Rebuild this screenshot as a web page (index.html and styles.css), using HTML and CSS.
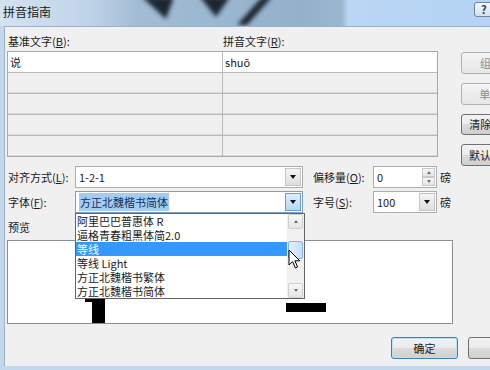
FILE: index.html
```html
<!DOCTYPE html>
<html lang="zh-CN">
<head>
  <meta charset="UTF-8">
  <title>拼音指南</title>
  <link rel="stylesheet" href="styles.css">
</head>
<body>
  <div class="window">
    <div class="titlebar">
      <svg class="glass" width="490" height="26" viewBox="0 0 490 26">
        <defs>
          <filter id="blur" x="-50%" y="-50%" width="200%" height="200%">
            <feGaussianBlur stdDeviation="2.2"/>
          </filter>
        </defs>
        <g filter="url(#blur)" fill="#1c2733">
          <path d="M142 -3 L174 -3 L166 19 Z"/>
          <path d="M200 -3 L230 -3 L216 17 Z"/>
          <path d="M262 -3 L272 -3 L247 25 L237 25 Z"/>
        </g>
      </svg>
      <span class="title">拼音指南</span>
      <span class="help">?</span>
    </div>

    <div class="client">
      <div class="top">
        <div class="main">
          <div class="heads">
            <span>基准文字(<u>B</u>):</span>
            <span>拼音文字(<u>R</u>):</span>
          </div>
          <div class="grid">
            <div class="cell on">说</div>
            <div class="cell on">shuō</div>
            <div class="cell"></div>
            <div class="cell"></div>
            <div class="cell"></div>
            <div class="cell"></div>
            <div class="cell"></div>
            <div class="cell"></div>
            <div class="cell"></div>
            <div class="cell"></div>
          </div>
        </div>
        <div class="side">
          <button class="btn" disabled>组合(<u>G</u>)</button>
          <button class="btn" disabled>单字(<u>M</u>)</button>
          <button class="btn">清除读音(<u>C</u>)</button>
          <button class="btn">默认读音(<u>D</u>)</button>
        </div>
      </div>

      <div class="opts">
        <label class="lbl">对齐方式(<u>L</u>):</label>
        <div class="combo">
          <span class="val">1-2-1</span>
          <span class="drop"><i class="tri"></i></span>
        </div>
        <label class="lbl lbl2">偏移量(<u>O</u>):</label>
        <div class="spin">
          <span class="val">0</span>
          <span class="arrows">
            <i class="arr"><b class="up"></b></i>
            <i class="arr"><b class="down"></b></i>
          </span>
        </div>
        <span class="unit">磅</span>

        <label class="lbl">字体(<u>F</u>):</label>
        <div class="combo focus">
          <span class="val"><span class="sel">方正北魏楷书简体</span></span>
          <span class="drop"><i class="tri"></i></span>
          <div class="list">
            <ul class="items">
              <li>阿里巴巴普惠体 R</li>
              <li>逼格青春粗黑体简2.0</li>
              <li class="hi">等线</li>
              <li>等线 Light</li>
              <li>方正北魏楷书繁体</li>
              <li>方正北魏楷书简体</li>
            </ul>
            <div class="scroll">
              <span class="sbtn"><b class="up"></b></span>
              <span class="thumb"></span>
              <span class="sbtn last"><b class="down"></b></span>
            </div>
          </div>
        </div>
        <label class="lbl lbl2">字号(<u>S</u>):</label>
        <div class="combo">
          <span class="val">100</span>
          <span class="drop"><i class="tri"></i></span>
        </div>
        <span class="unit">磅</span>
      </div>

      <div class="plabel">预览</div>
      <div class="preview">
        <svg width="444" height="82" viewBox="0 0 444 82">
          <path d="M77 56 H97 V82 H84 V61 H77 Z" fill="#000"/>
          <rect x="278" y="62" width="40" height="9" fill="#000"/>
        </svg>
      </div>

      <div class="actions">
        <button class="btn ok">确定</button>
        <button class="btn">取消</button>
      </div>
    </div>

    <svg class="cursor" width="14" height="21" viewBox="0 0 14 21">
      <path d="M1 1 V16 L4.6 12.6 L7.4 19 L9.6 18 L6.9 11.8 L11.8 11.8 Z" fill="#fff" stroke="#000" stroke-width="1" stroke-linejoin="round"/>
    </svg>
  </div>
</body>
</html>
```

FILE: styles.css
```css
/* Janela de diálogo estilo Windows 7 */
* {
  margin: 0;
  padding: 0;
  box-sizing: border-box;
}
html, body {
  width: 490px;
  height: 370px;
  overflow: hidden;
}
body {
  font-family: "Noto Sans CJK SC", "Noto Sans", sans-serif;
  font-size: 11px;
  color: #1b1b1b;
  background: #c4d8ec;
}
u {
  text-decoration: underline;
}
.window {
  position: relative;
  width: 540px;
  height: 370px;
  background: #c4d8ec;
}

/* Barra de título */
.titlebar {
  position: relative;
  height: 26px;
  background: linear-gradient(90deg, #d4e3f1 0, #bfd3e8 90px, #a2bcd5 138px, #94b0cb 300px, #9ab6d0 342px, #b9d7f5 348px, #b5d3f2 490px);
}
.glass {
  position: absolute;
  left: 0;
  top: 0;
}
.title {
  position: relative;
  display: block;
  padding-left: 3px;
  font-size: 12px;
  line-height: 24px;
  color: #1a1a1a;
}
.help {
  position: absolute;
  left: 474px;
  top: 2px;
  width: 26px;
  height: 15px;
  border: 1px solid #6f849b;
  border-radius: 3px;
  background: linear-gradient(#f6f9fc, #d3e0ee);
  font-size: 11px;
  line-height: 12px;
  padding-left: 6px;
  color: #3a3a3a;
  font-weight: bold;
}

/* Área do cliente */
.client {
  position: relative;
  margin-left: 4px;
  height: 340px;
  background: #f0f0f0;
  border-top: 1px solid #9cb1c6;
  border-left: 1px solid #9cb1c6;
  padding: 7px 0 0 2px;
}
.top {
  display: flex;
  gap: 23px;
  height: 132px;
}
.main {
  width: 431px;
}
.heads {
  display: grid;
  grid-template-columns: 215px 215px;
  line-height: 15px;
  margin-bottom: 2px;
  padding-left: 1px;
}
.grid {
  display: grid;
  grid-template-columns: 1fr 1fr;
  grid-auto-rows: 20px;
  gap: 1px;
  background: #b9b9b9;
  border: 1px solid #a9a9a9;
}
.cell {
  background: #f0f0f0;
  box-shadow: inset 0 -1px 0 #d9d9d9;
  line-height: 20px;
  padding-left: 2px;
}
.cell.on {
  background: #fff;
  box-shadow: none;
}
.side {
  display: flex;
  flex-direction: column;
  gap: 9px;
  margin-top: 18px;
}

/* Botões */
.btn {
  width: 75px;
  height: 22px;
  font-family: inherit;
  font-size: 11px;
  color: #1b1b1b;
  border: 1px solid #707070;
  border-radius: 3px;
  background: linear-gradient(#f2f2f2 0, #ebebeb 49%, #dddddd 50%, #cfcfcf 100%);
}
.btn[disabled] {
  color: #8d8d8d;
  border-color: #adb2b5;
  background: linear-gradient(#f4f4f4, #e6e6e6);
}
.btn.ok {
  width: 67px;
  border-color: #3c7fb1;
  box-shadow: inset 0 0 0 1px #b7e2f8;
}
.actions .btn {
  width: 67px;
}

/* Opções */
.opts {
  display: grid;
  grid-template-columns: 68px 228px 70px 64px 20px;
  grid-template-rows: 22px 22px;
  row-gap: 3px;
  align-items: center;
}
.lbl {
  padding-left: 1px;
}
.lbl2 {
  padding-left: 10px;
}
.unit {
  padding-left: 3px;
}
.combo {
  position: relative;
  display: flex;
  height: 22px;
  background: #fff;
  border: 1px solid #abadb3;
}
.combo.focus {
  border-color: #7d9fc4;
}
.val {
  flex: 1;
  padding-left: 3px;
  line-height: 20px;
  white-space: nowrap;
}
.sel {
  background: #a3ccf1;
  color: #12305c;
  padding: 1px 1px;
}
.drop {
  width: 16px;
  margin: 1px;
  border: 1px solid #c6c6c6;
  background: linear-gradient(#f5f5f5, #dedede);
  display: flex;
  align-items: center;
  justify-content: center;
}
.focus .drop {
  border-color: #6f9fd0;
  background: linear-gradient(#dcefFc, #b5d9f5);
}
.tri {
  width: 0;
  height: 0;
  border-left: 3.5px solid transparent;
  border-right: 3.5px solid transparent;
  border-top: 4px solid #111;
}
.spin {
  display: flex;
  height: 22px;
  background: #fff;
  border: 1px solid #abadb3;
}
.arrows {
  display: flex;
  flex-direction: column;
  width: 13px;
  margin: 1px;
}
.arr {
  flex: 1;
  border: 1px solid #c9c9c9;
  background: linear-gradient(#f6f6f6, #e3e3e3);
  display: flex;
  align-items: center;
  justify-content: center;
}
.up, .down {
  display: block;
  width: 0;
  height: 0;
  border-left: 2.5px solid transparent;
  border-right: 2.5px solid transparent;
}
.up {
  border-bottom: 3px solid #707070;
}
.down {
  border-top: 3px solid #707070;
}

/* Lista suspensa das fontes */
.list {
  position: absolute;
  left: -1px;
  top: 21px;
  width: 230px;
  height: 86px;
  z-index: 5;
  display: flex;
  background: #fff;
  border: 1px solid #646464;
}
.items {
  flex: 1;
  list-style: none;
}
.items li {
  height: 14px;
  line-height: 14px;
  padding-left: 1px;
  white-space: nowrap;
  color: #1b1b1b;
}
.items li.hi {
  background: #3399ff;
  color: #fff;
}
.scroll {
  width: 17px;
  display: flex;
  flex-direction: column;
  align-items: center;
  background: #f1f1f1;
}
.sbtn {
  width: 15px;
  height: 15px;
  border: 1px solid #cfcfcf;
  border-radius: 2px;
  background: linear-gradient(#f7f7f7, #e6e6e6);
  display: flex;
  align-items: center;
  justify-content: center;
}
.sbtn.last {
  margin-top: auto;
}
.thumb {
  width: 15px;
  height: 18px;
  margin-top: 12px;
  border: 1px solid #8bb3dc;
  border-radius: 2px;
  background: linear-gradient(90deg, #e4f1fb, #c3def5);
}

/* Pré-visualização */
.plabel {
  margin-top: 7px;
  line-height: 15px;
  padding-left: 1px;
}
.preview {
  width: 446px;
  height: 84px;
  margin-top: 5px;
  background: #fff;
  border: 1px solid #8a8f96;
}
.preview svg {
  display: block;
}
.actions {
  display: flex;
  gap: 10px;
  margin-top: 13px;
  padding-left: 384px;
}
.cursor {
  position: absolute;
  left: 288px;
  top: 249px;
  z-index: 10;
}
```
